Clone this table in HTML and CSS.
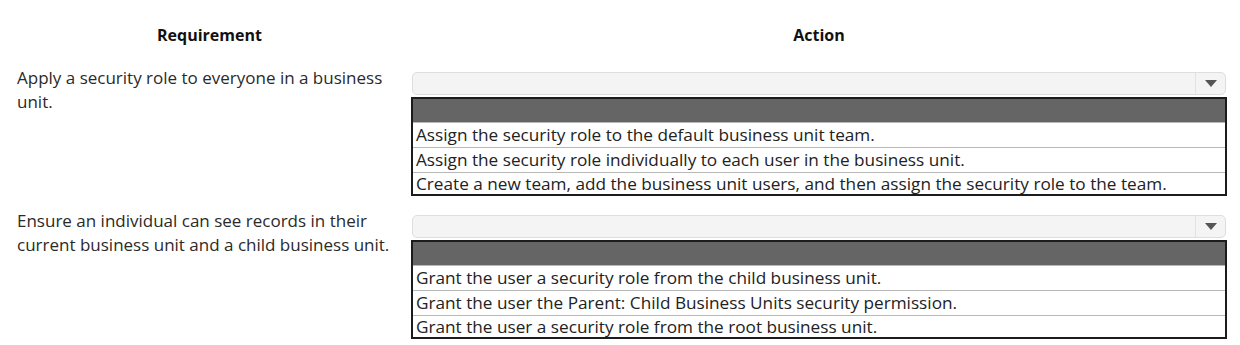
FILE: index.html
```html
<!DOCTYPE html>
<html>
<head>
<meta charset="utf-8">
<link rel="stylesheet" href="styles.css">
</head>
<body>
<div class="page">
  <div class="head-row">
    <div class="head req">Requirement</div>
    <div class="head act">Action</div>
  </div>

  <div class="block">
    <div class="req-text">Apply a security role to everyone in a business unit.</div>
    <div class="action">
      <div class="select"><div class="select-body"></div><div class="select-btn"><span class="arrow"></span></div></div>
      <div class="list">
        <div class="list-head"></div>
        <div class="opt">Assign the security role to the default business unit team.</div>
        <div class="opt">Assign the security role individually to each user in the business unit.</div>
        <div class="opt last">Create a new team, add the business unit users, and then assign the security role to the team.</div>
      </div>
    </div>
  </div>

  <div class="block second">
    <div class="req-text">Ensure an individual can see records in their current business unit and a child business unit.</div>
    <div class="action">
      <div class="select"><div class="select-body"></div><div class="select-btn"><span class="arrow"></span></div></div>
      <div class="list">
        <div class="list-head"></div>
        <div class="opt">Grant the user a security role from the child business unit.</div>
        <div class="opt">Grant the user the Parent: Child Business Units security permission.</div>
        <div class="opt last">Grant the user a security role from the root business unit.</div>
      </div>
    </div>
  </div>
</div>
</body>
</html>
```

FILE: styles.css
```css
* { box-sizing: border-box; }
html, body { margin: 0; padding: 0; background: #fff; }
body {
  font-family: "Open Sans", "Noto Sans", sans-serif;
  color: #222;
  font-size: 17px;
}
.page {
  width: 1240px;
  height: 345px;
  padding-top: 22px;
}
.head-row {
  display: grid;
  grid-template-columns: 411px 816px;
  height: 26px;
}
.head {
  text-align: center;
  font-weight: 700;
  font-size: 16px;
  line-height: 26px;
  color: #111;
}
.req { padding-left: 8px; }
.block {
  display: grid;
  grid-template-columns: 411px 816px;
  margin-top: 24px;
}
.block.second { margin-top: 19px; }
.req-text {
  padding-left: 17px;
  padding-right: 14px;
  line-height: 24px;
  margin-top: -6px;
  color: #2a2a2a;
}
.action {
  display: flex;
  flex-direction: column;
}
.select {
  display: flex;
  height: 23px;
  margin-left: 1px;
  width: 814px;
  border: 1px solid #dedede;
  border-radius: 5px;
  background: #f4f4f4;
  overflow: hidden;
}
.select-body { flex: 1; }
.select-btn {
  width: 30px;
  border-left: 1px solid #e2e2e2;
  display: flex;
  align-items: center;
  justify-content: center;
}
.arrow {
  width: 0; height: 0;
  border-left: 6px solid transparent;
  border-right: 6px solid transparent;
  border-top: 7px solid #555;
  margin-left: 1px;
}
.list {
  margin-top: 2px;
  border: 2px solid #1c1c1c;
  width: 816px;
}
.list-head {
  height: 23px;
  background: #666566;
}
.opt {
  height: 25px;
  line-height: 24px;
  font-size: 17.2px;
  padding-left: 3px;
  border-top: 1px solid #b8b8b8;
  white-space: nowrap;
  color: #222;
}
.opt.last { height: 22px; line-height: 21px; }
```
